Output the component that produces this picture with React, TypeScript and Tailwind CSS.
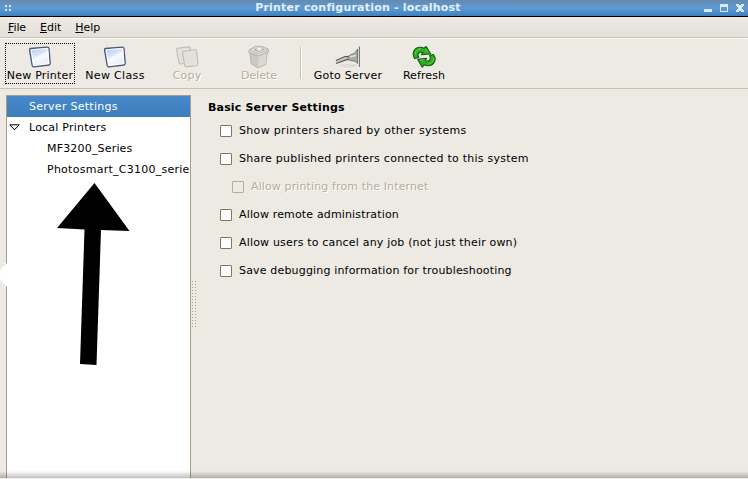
import React from "react";

function PageIcon() {
  return (
    <svg width="24" height="24" viewBox="0 0 24 24">
      <defs>
        <linearGradient id="page" x1="0" y1="0" x2="0.55" y2="1">
          <stop offset="0" stopColor="#a9c1ee" />
          <stop offset="0.5" stopColor="#dde7fa" />
          <stop offset="0.56" stopColor="#f8faff" />
          <stop offset="1" stopColor="#e6edfb" />
        </linearGradient>
      </defs>
      <path d="M2.5 4.5 19.3 3.1Q20.8 3 21 4.5L22.2 19.4Q22.3 20.8 20.9 21L5.8 22.9Q4.5 23.1 4.2 21.7L1.6 6.2Q1.3 4.6 2.5 4.5Z" fill="url(#page)" stroke="#4a5975" strokeWidth="1.3" />
      <path d="M3.2 5.8 19.6 4.4 20.8 19.6 5.8 21.5Z" fill="none" stroke="#fff" strokeWidth="0.9" />
    </svg>
  );
}

function CopyIcon() {
  return (
    <svg width="24" height="24" viewBox="0 0 24 24" fill="#e3e1dc" stroke="#bebcb7" strokeWidth="1.1">
      <path d="M2.5 4.2 13.7 2.9Q15 2.8 15.2 4.1L17 18.4 5.5 20Q4.2 20.1 4 18.8L1.6 5.5Q1.5 4.4 2.5 4.2Z" />
      <path d="M8.5 7.3 20 5.8Q21.3 5.7 21.5 7L23 20Q23 21.3 21.8 21.5L11.2 22.9Q10 23 9.7 21.7L7.5 8.7Q7.4 7.5 8.5 7.3Z" />
    </svg>
  );
}

function TrashIcon() {
  return (
    <svg width="24" height="24" viewBox="0 0 24 24" stroke="#b3b2ae" strokeWidth="0.9" strokeLinejoin="round">
      <path d="M2.8 8 4.2 20 11 23.9 18.8 20.5 20.5 8Z" fill="#cbc9c6" />
      <path d="M11.5 11.5 20 8.3 18.3 20 11.2 23.2Z" fill="#dad8d5" stroke="none" />
      <path d="M2 6 8.3 2.3 15 2.3 21.5 5.2V8.2L11.5 12 2 8.8Z" fill="#d5d3d0" />
      <path d="M2.3 6.2 8.5 2.7 14.8 2.7 21.2 5.6 11.5 9.3Z" fill="#dfddda" strokeWidth="0.6" />
      <path d="M6.5 5.8 10 3.8 14 3.8 17.5 5.6 11.8 7.8Z" fill="#a9a8a5" stroke="none" />
      <path d="M9 5.3 11 3.4 14.5 4 14.8 5.7 12 6.9Z" fill="#f2f0ed" stroke="none" />
    </svg>
  );
}

function GotoIcon() {
  return (
    <svg width="26" height="24" viewBox="0 0 26 24">
      <ellipse cx="13" cy="21.5" rx="9" ry="2" fill="#e0ddd7" />
      <path d="M1 18 10 14.3 16 13.8" stroke="#c9cac5" strokeWidth="2.4" fill="none" />
      <path d="M1 16.5 10 12.6 15 12.3M1 19.5 11 15.9 16 15.3" fill="none" stroke="#555651" strokeWidth="1.1" />
      <path d="M13 13Q15 10.3 18.5 9.7 21.3 8.5 22.5 5V19.5Q21.3 17.2 18.5 16.9 15 16.8 13 15.5Z" fill="#a7aaa4" stroke="#666963" strokeWidth="0.8" />
      <path d="M15 12.8 21 11.5" stroke="#e1e2df" strokeWidth="1.5" />
      <path d="M24.5 2.5V23" stroke="#777a74" />
      <path d="M23.5 3V22.5" stroke="#d5d8d1" />
    </svg>
  );
}

function RefreshIcon() {
  return (
    <svg width="24" height="24" viewBox="0 0 24 24" fill="#2bad20" stroke="#125b10" strokeWidth="1.1" strokeLinejoin="round">
      <path d="M2.5 14.5Q.3 10.7 1.8 7.2 3.8 3.2 8.5 3.3 10.5 3.3 12 4.3L14.2 2.5 18.7 10 9.4 10.8 10.9 8.8Q8.1 7.4 6.5 9.4 5.3 11 6.8 13.5Z" />
      <path d="M21.2 10.4Q24.2 13.5 22.7 17.2 20.7 21.7 16 21.8 14 21.8 12.2 20.8L10.3 23.2 5.7 15.4 14.7 14.3 13.3 16.4Q16.2 17.9 17.8 15.8 18.8 14 17.6 11.6Z" />
      <path d="M3.2 10.4Q3.5 5.4 9 4.6M13 5 15.8 8.4M8 16.3 12.5 15.8M21.5 14Q21.8 19 16 20.2" fill="none" stroke="#7ad66b" strokeWidth="0.8" />
    </svg>
  );
}

function Tool({ label, icon, className = "", off = false }: { label: string; icon: React.ReactNode; className?: string; off?: boolean }) {
  return (
    <div className={`flex h-[41px] shrink-0 flex-col items-center ${className} ${off ? "text-[#b8ac9b] [text-shadow:1px_1px_0_#fff]" : ""}`}>
      <div className="h-6">{icon}</div>
      <div className="mt-px h-[14px] leading-[14px]">{label}</div>
    </div>
  );
}

function Check({ label, className = "", off = false }: { label: string; className?: string; off?: boolean }) {
  return (
    <div className={`flex h-7 items-center ${off ? "pl-6 text-[#b8ac9b] [text-shadow:1px_1px_0_#fff]" : "pl-3"}`}>
      <span className={`mr-[7px] mt-px h-3 w-3 rounded-[1px] border ${off ? "border-[#b8ac9b]" : "border-[#817661] bg-white"}`} />
      <span className={`mt-px ${className}`}>{label}</span>
    </div>
  );
}

export default function App() {
  return (
    <div className="flex h-[479px] w-[748px] flex-col overflow-hidden whitespace-nowrap bg-[#ede9e3] font-['DejaVu_Sans',sans-serif] text-[11px] leading-[14px] text-black">
      <header className="flex h-[17px] shrink-0 items-center border-b border-black bg-linear-to-b from-[#648bad] via-[#5e9bd6] to-[#3e7fbf] text-[#e4effa]">
        <svg className="ml-1 shrink-0" width="8" height="8" fill="#d5e6f5"><path d="M1 1h2v2H1zM5 1h2v2H5zM1 5h2v2H1zM5 5h2v2H5z" /></svg>
        <div className="flex-1 text-center font-bold leading-[14px] tracking-[0.2px]">Printer configuration - localhost</div>
        <svg className="mr-1 shrink-0" width="40" height="10" viewBox="0 0 40 10" fill="#d9e9f7" shapeRendering="crispEdges">
          <path d="M0 6h8v3H0z" />
          <path fillRule="evenodd" d="M16 1h8v8h-8zM17 4v4h6V4z" />
          <path d="M32 1h3v1h2V1h3v2h-1v1h-1v2h1v1h1v2h-3V8h-2v1h-3V7h1V6h1V4h-1V3h-1z" />
        </svg>
      </header>

      <nav className="flex h-[22px] shrink-0 items-center gap-[14px] border-b border-white bg-linear-to-b from-[#ede9e3] to-[#e5dfd9] pl-2 shadow-[inset_0_-1px_0_#c9c1b1]">
        <span className="tracking-[-0.1px]"><u>F</u>ile</span>
        <span><u>E</u>dit</span>
        <span className="tracking-[-0.1px]"><u>H</u>elp</span>
      </nav>

      <div className="flex h-[50px] shrink-0 items-start border-b border-[#c9bfae] pl-[5px] pt-1">
        <Tool label="New Printer" className="w-[70px] border border-dotted border-black tracking-[0.2px]" icon={<PageIcon />} />
        <Tool label="New Class" className="ml-[5px] w-[70px] pt-px tracking-[0.35px]" icon={<PageIcon />} />
        <Tool label="Copy" off className="ml-[17px] w-10 pt-px tracking-[0.2px]" icon={<CopyIcon />} />
        <Tool label="Delete" off className="ml-[31px] w-[42px] pt-px" icon={<TrashIcon />} />
        <div className="ml-5 mt-1 h-8 w-[2px] border-r border-white bg-[#c9bfae]" />
        <Tool label="Goto Server" className="ml-[11px] w-[70px] pt-px tracking-[0.25px]" icon={<GotoIcon />} />
        <Tool label="Refresh" className="ml-[18px] w-[46px] pt-px tracking-[0.1px]" icon={<RefreshIcon />} />
      </div>

      <main className="relative flex min-h-0 flex-1 pl-[6px] pt-[6px]">
        <div className="w-[185px] shrink-0 border border-b-0 border-[#a99d87] bg-white">
          <div className="flex h-[21px] items-center bg-linear-to-b from-[#4789c9] to-[#3b7dbd] pl-[22px] tracking-[0.27px] text-white">Server Settings</div>
          <div className="flex h-[21px] items-center tracking-[0.22px]">
            <svg className="ml-[2px] mr-[9px]" width="11" height="7" viewBox="0 0 11 7"><path d="M0.8 0.8H10.2L5.5 5.8Z" fill="#fff" stroke="#000" /></svg>
            Local Printers
          </div>
          <div className="flex h-[21px] items-center pl-10 tracking-[0.18px]">MF3200_Series</div>
          <div className="flex h-[21px] items-center pl-10 tracking-[0.26px]">Photosmart_C3100_serie</div>
        </div>
        <div className="mt-[185px] h-12 w-[7px] shrink-0 bg-[radial-gradient(circle_at_1.5px_1.5px,#aaa294_0.7px,transparent_0.8px)] bg-[length:3px_3px]" />
        <section className="pl-[10px] pt-[6px]">
          <h1 className="mb-px font-bold leading-[14px] tracking-[0.17px]">Basic Server Settings</h1>
          <Check className="tracking-[0.32px]" label="Show printers shared by other systems" />
          <Check className="tracking-[0.25px]" label="Share published printers connected to this system" />
          <Check className="tracking-[0.12px]" label="Allow printing from the Internet" off />
          <Check className="tracking-[0.15px]" label="Allow remote administration" />
          <Check className="tracking-[0.18px]" label="Allow users to cancel any job (not just their own)" />
          <Check className="tracking-[0.17px]" label="Save debugging information for troubleshooting" />
        </section>
        <svg className="absolute left-0 top-[94px]" width="140" height="190" viewBox="0 0 140 190">
          <path d="M7 80V104L0 96V87Z" fill="#fff" />
          <path d="M94.5 0 129.5 48 101 47 96.5 182 80 181 84.5 46.5 57 45Z" fill="#000" />
        </svg>
        <div className="absolute inset-x-0 bottom-0 h-2 border-b border-[#f0eeea] bg-linear-to-b from-transparent to-black/25" />
      </main>
    </div>
  );
}
